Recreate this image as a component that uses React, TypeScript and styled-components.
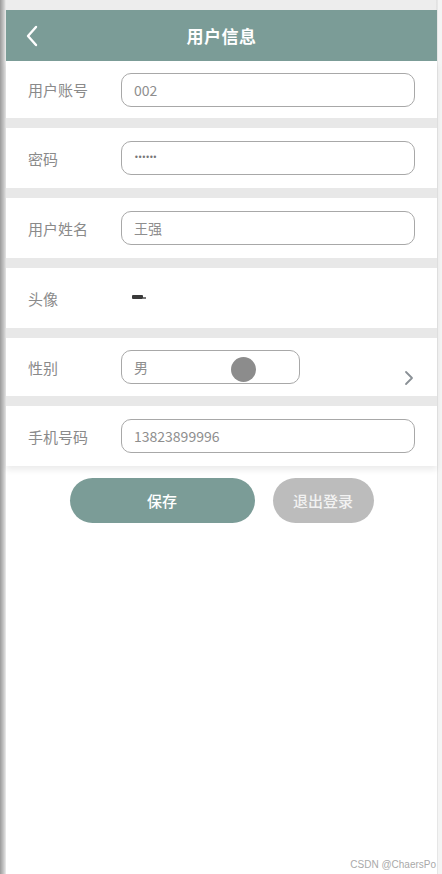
import React from "react";
import styled, { createGlobalStyle } from "styled-components";

const GlobalStyle = createGlobalStyle`
  html, body {
    margin: 0;
    padding: 0;
    background: #ffffff;
  }
  * {
    box-sizing: border-box;
  }
`;

const Screen = styled.div`
  position: relative;
  width: 442px;
  height: 874px;
  padding: 10px 5px 0 6px;
  background: linear-gradient(to right, #9a9a9a 0px, #cccccc 4px, #ededed 6px, #ededed 436px, #d8d8d8 437px, #f4f4f4 438px);
  font-family: "Noto Sans CJK SC", "Noto Sans", sans-serif;
  overflow: hidden;
`;

const Page = styled.div`
  height: 100%;
  background: #ffffff;
  display: flex;
  flex-direction: column;
`;

const Header = styled.div`
  position: relative;
  height: 51px;
  background: #7b9c97;
  display: flex;
  align-items: center;
  justify-content: center;
`;

const BackButton = styled.button`
  position: absolute;
  left: 14px;
  top: 13px;
  width: 24px;
  height: 26px;
  padding: 0;
  border: none;
  background: transparent;
  display: flex;
  align-items: center;
  justify-content: center;
`;

const Title = styled.h1`
  margin: 0;
  color: #ffffff;
  font-size: 17px;
  font-weight: 700;
  letter-spacing: 0.5px;
`;

const FieldList = styled.div`
  display: flex;
  flex-direction: column;
  gap: 10px;
  background: #e8e8e8;
  box-shadow: 0 4px 6px rgba(0, 0, 0, 0.08);
`;

const Row = styled.div<{ $h: number }>`
  position: relative;
  height: ${({ $h }) => $h}px;
  background: #ffffff;
  display: flex;
  align-items: center;
  padding: 0 22px 0 22px;
`;

const Label = styled.span`
  width: 93px;
  flex-shrink: 0;
  color: #8a8a8a;
  font-size: 15px;
`;

const Field = styled.div<{ $w?: number }>`
  position: relative;
  height: 34px;
  ${({ $w }) => ($w ? `width: ${$w}px;` : "flex: 1;")}
  border: 1px solid #a8a8a8;
  border-radius: 10px;
  padding: 0 12px;
  display: flex;
  align-items: center;
  color: #8e8e8e;
  font-size: 14px;
`;

const Dots = styled.span`
  font-family: "DejaVu Sans", sans-serif;
  font-size: 8px;
  letter-spacing: -1px;
  color: #777777;
  margin-top: -2px;
`;

const Knob = styled.span`
  position: absolute;
  left: 109px;
  top: 6px;
  width: 25px;
  height: 25px;
  border-radius: 50%;
  background: #8c8c8c;
`;

const Chevron = styled.span`
  position: absolute;
  right: 22px;
  top: 32px;
  display: flex;
`;

const Avatar = styled.span`
  display: flex;
  margin-top: -2px;
  margin-left: 10px;
`;

const Actions = styled.div`
  display: flex;
  justify-content: center;
  gap: 18px;
  margin-top: 12px;
`;

const Button = styled.button<{ $tone: "primary" | "muted"; $w: number }>`
  width: ${({ $w }) => $w}px;
  height: 45px;
  border: none;
  border-radius: 23px;
  background: ${({ $tone }) => ($tone === "primary" ? "#7b9c97" : "#bcbcbc")};
  color: ${({ $tone }) => ($tone === "primary" ? "#ffffff" : "#f2f2f2")};
  font-family: "Noto Sans CJK SC", "Noto Sans", sans-serif;
  font-size: 15px;
  font-weight: 500;
`;

const Watermark = styled.span`
  position: absolute;
  right: 6px;
  bottom: 4px;
  font-family: "Liberation Sans", Arial, sans-serif;
  font-size: 10px;
  color: #a9a9a9;
`;

const App: React.FC = () => {
  return (
    <>
      <GlobalStyle />
      <Screen>
        <Page>
          <Header>
            <BackButton>
              <svg width="14" height="24" viewBox="0 0 14 24">
                <path d="M11 3 L3 12 L11 21" fill="none" stroke="#ffffff" strokeWidth="2.4" strokeLinecap="round" strokeLinejoin="round" />
              </svg>
            </BackButton>
            <Title>用户信息</Title>
          </Header>

          <FieldList>
            <Row $h={57}>
              <Label>用户账号</Label>
              <Field>002</Field>
            </Row>
            <Row $h={60}>
              <Label>密码</Label>
              <Field><Dots>••••••</Dots></Field>
            </Row>
            <Row $h={60}>
              <Label>用户姓名</Label>
              <Field>王强</Field>
            </Row>
            <Row $h={60}>
              <Label>头像</Label>
              <Avatar>
                <svg width="16" height="8" viewBox="0 0 16 8">
                  <rect x="1" y="2" width="11" height="4" rx="1" fill="#3a3a3a" />
                  <rect x="12" y="4" width="3" height="2" fill="#777" />
                </svg>
              </Avatar>
            </Row>
            <Row $h={58}>
              <Label>性别</Label>
              <Field $w={179}>
                男
                <Knob />
              </Field>
              <Chevron>
                <svg width="12" height="16" viewBox="0 0 12 16">
                  <path d="M3 2 L9 8 L3 14" fill="none" stroke="#8a9096" strokeWidth="1.8" strokeLinecap="round" strokeLinejoin="round" />
                </svg>
              </Chevron>
            </Row>
            <Row $h={60}>
              <Label>手机号码</Label>
              <Field>13823899996</Field>
            </Row>
          </FieldList>

          <Actions>
            <Button $tone="primary" $w={185}>保存</Button>
            <Button $tone="muted" $w={101}>退出登录</Button>
          </Actions>
        </Page>
        <Watermark>CSDN @ChaersPo</Watermark>
      </Screen>
    </>
  );
};

export default App;
